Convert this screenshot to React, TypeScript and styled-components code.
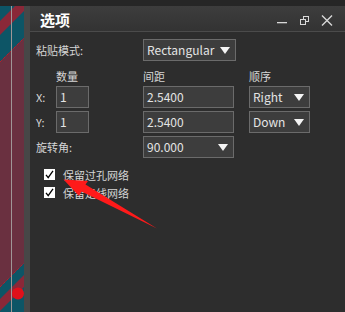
import React from "react";
import styled, { createGlobalStyle } from "styled-components";

const Global = createGlobalStyle`
  html, body { margin: 0; padding: 0; background: #2d2d2d; overflow: hidden; }
  * { box-sizing: border-box; }
`;

const Screen = styled.div`
  position: relative;
  width: 345px;
  height: 312px;
  display: flex;
  flex-direction: column;
  background: #2d2d2d;
  font-family: "Noto Sans CJK SC", "Noto Sans", sans-serif;
  color: #d8d8d8;
  overflow: hidden;
`;

const TopStrip = styled.div`
  height: 6px;
  background: #262626;
  flex: none;
`;

const Main = styled.div`
  flex: 1;
  display: flex;
  min-height: 0;
`;

const CanvasStrip = styled.div`
  width: 24px;
  flex: none;
  background: #6a3040;
  svg { display: block; }
`;

const DockDivider = styled.div`
  width: 6px;
  flex: none;
  background: #474747;
`;

const Panel = styled.div`
  flex: 1;
  display: flex;
  flex-direction: column;
  background: #2d2d2d;
`;

const TitleBar = styled.div`
  height: 26px;
  flex: none;
  display: flex;
  align-items: center;
  padding-left: 10px;
  background: linear-gradient(#3d3d3d, #333333);
  border-bottom: 1px solid #4b4b4b;
`;

const Title = styled.div`
  flex: 1;
  font-size: 15px;
  font-weight: 700;
  color: #ffffff;
  line-height: 1;
  padding-top: 1px;
`;

const TitleButtons = styled.div`
  display: flex;
  align-items: center;
  margin-right: 8px;
  svg { display: block; }
`;

const TitleButton = styled.div<{ $w: number }>`
  width: ${(p) => p.$w}px;
  height: 20px;
  display: flex;
  align-items: center;
  justify-content: center;
`;

const Body = styled.div`
  padding: 7px 0 0 6px;
`;

const Grid = styled.div`
  display: grid;
  grid-template-columns: 20px 87px 106px 1fr;
  grid-template-rows: 22px 19px 22px 22px 22px;
  row-gap: 3px;
`;

const Label = styled.div<{ $span?: boolean; $col?: number }>`
  grid-column: ${(p) => (p.$span ? "1 / 3" : p.$col ? `${p.$col}` : "auto")};
  align-self: center;
  font-size: 11px;
  line-height: 14px;
  white-space: nowrap;
  color: #d6d6d6;
`;

const HeadLabel = styled(Label)`
  align-self: end;
`;

const Field = styled.div<{ $w: number; $col: number }>`
  grid-column: ${(p) => p.$col};
  width: ${(p) => p.$w}px;
  height: 22px;
  background: #3d3d3d;
  border: 1px solid #6b6b6b;
  display: flex;
  align-items: center;
  padding-left: 3px;
  font-size: 12px;
  color: #e4e4e4;
  white-space: nowrap;
`;

const FieldText = styled.span`
  flex: 1;
  line-height: 1;
`;

const Caret = styled.span`
  width: 0;
  height: 0;
  border-left: 5px solid transparent;
  border-right: 5px solid transparent;
  border-top: 7px solid #f4f4f4;
  margin-right: 5px;
`;

const Checks = styled.div`
  margin-top: 8px;
  display: flex;
  flex-direction: column;
  gap: 1px;
`;

const CheckRow = styled.div`
  height: 17px;
  display: flex;
  align-items: center;
  padding-left: 8px;
  gap: 8px;
  font-size: 11px;
  color: #d6d6d6;
`;

const Box = styled.div`
  width: 11px;
  height: 11px;
  background: #ffffff;
  display: flex;
  align-items: center;
  justify-content: center;
  svg { display: block; }
`;

const Overlay = styled.svg`
  position: absolute;
  left: 0;
  top: 0;
  pointer-events: none;
`;

const Dropdown: React.FC<{ w: number; col: number; text: string }> = ({ w, col, text }) => (
  <Field $w={w} $col={col}>
    <FieldText>{text}</FieldText>
    <Caret />
  </Field>
);

const Input: React.FC<{ w: number; col: number; text: string }> = ({ w, col, text }) => (
  <Field $w={w} $col={col}>
    <FieldText>{text}</FieldText>
  </Field>
);

const Check: React.FC<{ label: string }> = ({ label }) => (
  <CheckRow>
    <Box>
      <svg width="11" height="11" viewBox="0 0 11 11">
        <path d="M2 5.8 L4.2 8.6 L9 1.8" fill="none" stroke="#000" strokeWidth="1.3" />
      </svg>
    </Box>
    <span>{label}</span>
  </CheckRow>
);

/* diagonal band between x+y=a and x+y=b inside the 24px strip */
const band = (a: number, b: number) =>
  `0,${a} 24,${a - 24} 24,${b - 24} 0,${b}`;

const PcbCanvas: React.FC = () => (
  <svg width="24" height="306" viewBox="0 0 24 306">
    <defs>
      <clipPath id="topc">
        <polygon points="0,0 24,0 24,32 0,56" />
      </clipPath>
      <clipPath id="botc">
        <polygon points="0,281 24,257 24,306 0,306" />
      </clipPath>
    </defs>
    <rect x="0" y="0" width="24" height="306" fill="#6a3040" />
    <g clipPath="url(#topc)">
      <rect x="0" y="0" width="24" height="60" fill="#0d5566" />
      <polygon points={band(15, 29)} fill="#8a2838" />
      <polygon points={band(-20, -8)} fill="#8a2838" />
    </g>
    <line x1="0" y1="56" x2="24" y2="32" stroke="#e8101c" strokeWidth="1" strokeDasharray="1 1" />
    <g clipPath="url(#botc)">
      <rect x="0" y="250" width="24" height="56" fill="#0d5566" />
      <polygon points={band(293, 305)} fill="#8a2838" />
    </g>
    <line x1="0" y1="281" x2="24" y2="257" stroke="#e8101c" strokeWidth="1" strokeDasharray="1 1" />
    <circle cx="18" cy="287.5" r="6" fill="#e0101a" />
    <rect x="11" y="0" width="1" height="306" fill="#a09696" />
  </svg>
);

export default function App() {
  return (
    <Screen>
      <Global />
      <TopStrip />
      <Main>
        <CanvasStrip>
          <PcbCanvas />
        </CanvasStrip>
        <DockDivider />
        <Panel>
          <TitleBar>
            <Title>选项</Title>
            <TitleButtons>
              <TitleButton $w={18}>
                <svg width="12" height="14" viewBox="0 0 12 14">
                  <rect x="1" y="10" width="10" height="1.3" fill="#d8d8d8" />
                </svg>
              </TitleButton>
              <TitleButton $w={26}>
                <svg width="12" height="14" viewBox="0 0 12 14">
                  <rect x="5.5" y="4.5" width="5" height="5" fill="none" stroke="#d8d8d8" strokeWidth="1" />
                  <rect x="2.5" y="7.5" width="5" height="5" fill="#383838" stroke="#d8d8d8" strokeWidth="1" />
                </svg>
              </TitleButton>
              <TitleButton $w={20}>
                <svg width="12" height="14" viewBox="0 0 12 14">
                  <path d="M1 3.5 L11 13.5 M11 3.5 L1 13.5" stroke="#d8d8d8" strokeWidth="1.4" />
                </svg>
              </TitleButton>
            </TitleButtons>
          </TitleBar>
          <Body>
            <Grid>
              <Label $span>粘贴模式:</Label>
              <Dropdown w={93} col={3} text="Rectangular" />

              <HeadLabel $col={2}>数量</HeadLabel>
              <HeadLabel $col={3}>间距</HeadLabel>
              <HeadLabel $col={4}>顺序</HeadLabel>

              <Label $col={1}>X:</Label>
              <Input w={33} col={2} text="1" />
              <Input w={91} col={3} text="2.5400" />
              <Dropdown w={61} col={4} text="Right" />

              <Label $col={1}>Y:</Label>
              <Input w={33} col={2} text="1" />
              <Input w={91} col={3} text="2.5400" />
              <Dropdown w={61} col={4} text="Down" />

              <Label $span>旋转角:</Label>
              <Dropdown w={91} col={3} text="90.000" />
            </Grid>
            <Checks>
              <Check label="保留过孔网络" />
              <Check label="保留走线网络" />
            </Checks>
          </Body>
        </Panel>
      </Main>
      <Overlay width="345" height="312" viewBox="0 0 345 312">
        <polygon
          points="63.5,179.5 88,181 85.5,184.5 157,228.5 81.5,191.5 79,196"
          fill="#ff1a1a"
        />
      </Overlay>
    </Screen>
  );
}
